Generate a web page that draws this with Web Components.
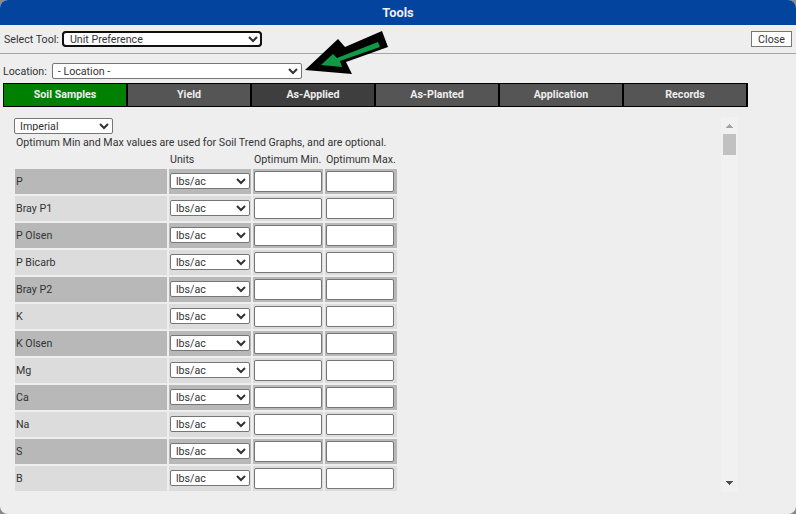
<!DOCTYPE html>
<html>
<head>
<meta charset="utf-8">
<title>Tools</title>
<style>
html, body { margin: 0; padding: 0; background: #8a8a8a; }
body { width: 796px; height: 514px; overflow: hidden; font: 10.67px Roboto, "Liberation Sans", sans-serif; color: #333; }
</style>
</head>
<body>
<tools-dialog>
    <unit-row slot="rows" label="P" dark></unit-row>
    <unit-row slot="rows" label="Bray P1"></unit-row>
    <unit-row slot="rows" label="P Olsen" dark></unit-row>
    <unit-row slot="rows" label="P Bicarb"></unit-row>
    <unit-row slot="rows" label="Bray P2" dark></unit-row>
    <unit-row slot="rows" label="K"></unit-row>
    <unit-row slot="rows" label="K Olsen" dark></unit-row>
    <unit-row slot="rows" label="Mg"></unit-row>
    <unit-row slot="rows" label="Ca" dark></unit-row>
    <unit-row slot="rows" label="Na"></unit-row>
    <unit-row slot="rows" label="S" dark></unit-row>
    <unit-row slot="rows" label="B"></unit-row>
</tools-dialog>
<script>
(function () {

    const rowTemplate = document.createElement('template');
    rowTemplate.innerHTML =
        '<style>' +
        ':host { display: grid; grid-template-columns: 152px 82px 70px 72px; column-gap: 2px; height: 25px; margin-bottom: 2px; }' +
        '.cell { background: #dcdcdc; display: flex; align-items: center; padding-left: 1px; }' +
        ':host([dark]) .cell { background: #b8b8b8; }' +
        '.name { color: #333; }' +
        'select { width: 80px; height: 16px; margin-top: -1px; padding: 0 0 2px 1px; font: 10.67px Roboto, sans-serif; color: #333; background: #fff; border: 1px solid #767676; border-radius: 2px; }' +
        'input { box-sizing: border-box; height: 21px; width: 68px; background: #fff; border: 1px solid #767676; border-radius: 2px; padding: 0; margin: 0; }' +
        '</style>' +
        '<div class="cell name"></div>' +
        '<div class="cell"><select><option>lbs/ac</option></select></div>' +
        '<div class="cell"><input type="text"></div>' +
        '<div class="cell"><input type="text"></div>';

    class UnitRow extends HTMLElement {
        constructor() {
            super();
            this.attachShadow({ mode: 'open' });
            this.shadowRoot.appendChild(rowTemplate.content.cloneNode(true));
        }
        connectedCallback() {
            this.shadowRoot.querySelector('.name').textContent = this.getAttribute('label');
        }
    }
    customElements.define('unit-row', UnitRow);

    const tabsTemplate = document.createElement('template');
    tabsTemplate.innerHTML =
        '<style>' +
        ':host { display: grid; grid-template-columns: repeat(6, 122px); column-gap: 2px; width: 745px; height: 24px; margin-left: 3px; background: #000; box-sizing: border-box; padding: 1px 2px 1px 1px; }' +
        'div { display: flex; align-items: center; justify-content: center; padding-bottom: 2px; box-sizing: border-box; background: #555; color: #eee; font: bold 10.67px Roboto, sans-serif; }' +
        '.on { background: #008000; }' +
        '.hover { background: #3e3e3e; }' +
        '</style>' +
        '<div class="on">Soil Samples</div><div>Yield</div><div class="hover">As-Applied</div>' +
        '<div>As-Planted</div><div>Application</div><div>Records</div>';

    class ToolTabs extends HTMLElement {
        constructor() {
            super();
            this.attachShadow({ mode: 'open' });
            this.shadowRoot.appendChild(tabsTemplate.content.cloneNode(true));
        }
    }
    customElements.define('tool-tabs', ToolTabs);

    const scrollTemplate = document.createElement('template');
    scrollTemplate.innerHTML =
        '<style>' +
        ':host { display: flex; flex-direction: column; align-items: center; width: 17px; height: 375px; background: #f1f1f1; }' +
        'svg { display: block; flex: none; }' +
        '.thumb { width: 13px; height: 21px; background: #c1c1c1; flex: none; }' +
        '.space { flex: 1; }' +
        '</style>' +
        '<svg width="17" height="17" viewBox="0 0 17 17" shape-rendering="crispEdges"><path d="M8 7 h1 v1 h1 v1 h1 v1 h1 v1 h-7 v-1 h1 v-1 h1 v-1 h1 z" fill="#a3a3a3"/></svg>' +
        '<div class="thumb"></div><div class="space"></div>' +
        '<svg width="17" height="17" viewBox="0 0 17 17" shape-rendering="crispEdges"><path d="M5 6 h7 v1 h-1 v1 h-1 v1 h-1 v1 h-1 v-1 h-1 v-1 h-1 v-1 h-1 z" fill="#505050"/></svg>';

    class ScrollRail extends HTMLElement {
        constructor() {
            super();
            this.attachShadow({ mode: 'open' });
            this.shadowRoot.appendChild(scrollTemplate.content.cloneNode(true));
        }
    }
    customElements.define('scroll-rail', ScrollRail);

    const dialogTemplate = document.createElement('template');
    dialogTemplate.innerHTML =
        '<style>' +
        ':host { display: block; position: relative; width: 796px; height: 514px; background: #eee; border-radius: 8px; overflow: hidden; color: #333; }' +
        'header { height: 25px; background: #03449e; color: #eee; display: flex; align-items: center; justify-content: center; font: bold 12.8px Roboto, sans-serif; }' +
        '.toolbar { height: 29px; box-sizing: border-box; display: flex; align-items: center; padding: 0 4px; border-bottom: 1px solid #a5a5a5; }' +
        '.toolbar label { margin-right: 3px; }' +
        '.toolbar select { width: 200px; height: 16px; border: 1px solid #111; outline: 2px solid #111; outline-offset: -2px; border-radius: 4px; background: #fff; font: 10.67px Roboto, sans-serif; color: #333; padding: 0 0 2px 3px; }' +
        'button { margin-left: auto; width: 41px; height: 16px; padding: 0; background: #fff; border: 1px solid #767676; font: 10.67px Roboto, sans-serif; color: #333; border-radius: 0; }' +
        '.location { height: 29px; display: flex; align-items: center; padding: 6px 0 0 3px; box-sizing: border-box; }' +
        '.location label { margin-right: 5px; }' +
        '.location select { width: 250px; height: 16px; margin-top: -1px; border: 1px solid #767676; border-radius: 2px; background: #fff; font: 10.67px Roboto, sans-serif; color: #333; padding: 0 0 2px 1px; }' +
        '.body { display: flex; padding-top: 10px; }' +
        '.main { width: 720px; padding: 1px 0 0 14px; box-sizing: border-box; flex: none; }' +
        '.system { width: 99px; height: 16px; border: 1px solid #767676; border-radius: 2px; background: #fff; font: 10.67px Roboto, sans-serif; color: #333; padding: 0 0 2px 1px; display: block; }' +
        '.note { margin: 2px 0 0 2px; height: 14px; line-height: 14px; white-space: nowrap; }' +
        '.heads { display: grid; grid-template-columns: 152px 82px 70px 72px; column-gap: 2px; margin: 3px 0 2px 1px; height: 14px; line-height: 14px; white-space: nowrap; }' +
        '.heads span { padding-left: 1px; }' +
        '.rows { margin-left: 1px; }' +
        'scroll-rail { margin-left: 1px; flex: none; }' +
        '.arrow { position: absolute; left: 300px; top: 28px; }' +
        '</style>' +
        '<header>Tools</header>' +
        '<div class="toolbar"><label>Select Tool:</label><select><option>Unit Preference</option></select><button>Close</button></div>' +
        '<div class="location"><label>Location:</label><select><option>- Location -</option></select></div>' +
        '<tool-tabs></tool-tabs>' +
        '<div class="body"><div class="main">' +
        '<select class="system"><option>Imperial</option></select>' +
        '<div class="note">Optimum Min and Max values are used for Soil Trend Graphs, and are optional.</div>' +
        '<div class="heads"><span></span><span>Units</span><span>Optimum Min.</span><span>Optimum Max.</span></div>' +
        '<div class="rows"><slot name="rows"></slot></div>' +
        '</div><scroll-rail></scroll-rail></div>' +
        '<svg class="arrow" width="95" height="50" viewBox="300 28 95 50">' +
        '<path d="M305 70 L338 39 L345 47 L382 31 L388 47 L346 62 L352 74 Z" fill="#000"/>' +
        '<path d="M321 65 L333 54 L337 58 L378 42 L380 47 L340 61 L342 67 Z" fill="#0f9a45"/>' +
        '</svg>';

    class ToolsDialog extends HTMLElement {
        constructor() {
            super();
            this.attachShadow({ mode: 'open' });
            this.shadowRoot.appendChild(dialogTemplate.content.cloneNode(true));
        }
    }
    customElements.define('tools-dialog', ToolsDialog);

})();
</script>
</body>
</html>
